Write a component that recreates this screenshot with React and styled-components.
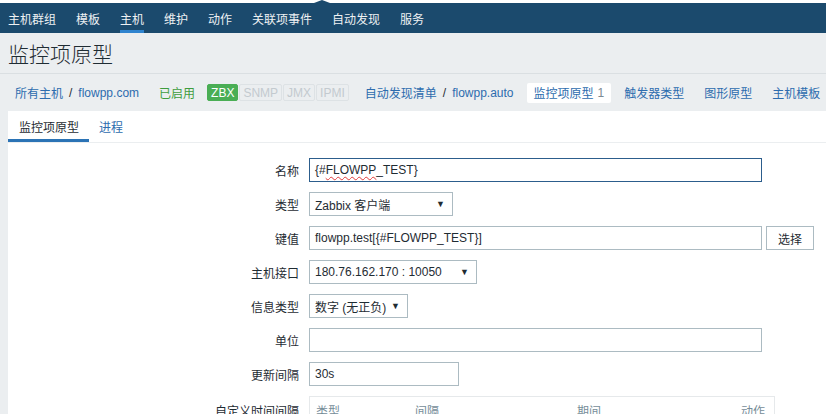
import React from 'react';
import styled, { createGlobalStyle } from 'styled-components';

const FONT = '"Liberation Sans", "Noto Sans CJK SC", Arial, sans-serif';

const GlobalStyle = createGlobalStyle`
  html, body {
    margin: 0;
    padding: 0;
    background: #ebeef0;
    font-family: ${FONT};
    font-size: 12px;
    color: #1f2c33;
    overflow: hidden;
  }
`;

const navItems = ['主机群组', '模板', '主机', '维护', '动作', '关联项事件', '自动发现', '服务'];

const formRows = [
  { label: '名称', kind: 'focused', width: 453 },
  { label: '类型', kind: 'select', width: 144, value: 'Zabbix 客户端' },
  { label: '键值', kind: 'button', width: 453, value: 'flowpp.test[{#FLOWPP_TEST}]' },
  { label: '主机接口', kind: 'select', width: 168, value: '180.76.162.170 : 10050' },
  { label: '信息类型', kind: 'select', width: 99, value: '数字 (无正负)' },
  { label: '单位', kind: 'text', width: 453, value: '' },
  { label: '更新间隔', kind: 'text', width: 150, value: '30s' },
];

function App() {
  return (
    <>
      <GlobalStyle />
      <TopStrip />
      <Nav>
        {navItems.map((item) => (
          <NavItem key={item} active={item === '主机'}>
            {item}
          </NavItem>
        ))}
      </Nav>

      <Header>
        <Title>监控项原型</Title>
      </Header>

      <Crumbs>
        <Crumb>
          <Link>所有主机</Link>
          <Slash>/</Slash>
          <Link>flowpp.com</Link>
        </Crumb>
        <Crumb>
          <Enabled>已启用</Enabled>
          <Badges>
            <Badge on>ZBX</Badge>
            <Badge>SNMP</Badge>
            <Badge>JMX</Badge>
            <Badge>IPMI</Badge>
          </Badges>
        </Crumb>
        <Crumb>
          <Link>自动发现清单</Link>
          <Slash>/</Slash>
          <Link>flowpp.auto</Link>
        </Crumb>
        <Crumb selected>
          <Link>监控项原型</Link>
          <Count>1</Count>
        </Crumb>
        <Crumb>
          <Link>触发器类型</Link>
        </Crumb>
        <Crumb>
          <Link>图形原型</Link>
        </Crumb>
        <Crumb>
          <Link>主机模板</Link>
        </Crumb>
      </Crumbs>

      <Panel>
        <Tabs>
          <Tab active>监控项原型</Tab>
          <Tab>进程</Tab>
        </Tabs>

        <Form>
          {formRows.map((row) => (
            <React.Fragment key={row.label}>
              <Label>{row.label}</Label>
              <Cell>
                {row.kind === 'focused' && (
                  <TextBox width={row.width} focused>
                    {'{#'}
                    <Misspelled>FLOWPP</Misspelled>
                    {'_TEST}'}
                  </TextBox>
                )}
                {row.kind === 'text' && <TextBox width={row.width}>{row.value}</TextBox>}
                {row.kind === 'button' && (
                  <>
                    <TextBox width={row.width}>{row.value}</TextBox>
                    <Button>选择</Button>
                  </>
                )}
                {row.kind === 'select' && (
                  <Select width={row.width}>
                    <span>{row.value}</span>
                    <Arrow>▼</Arrow>
                  </Select>
                )}
              </Cell>
            </React.Fragment>
          ))}
          <Label top>自定义时间间隔</Label>
          <Cell>
            <IntervalTable>
              <span>类型</span>
              <span>间隔</span>
              <span>期间</span>
              <RightCol>动作</RightCol>
            </IntervalTable>
          </Cell>
        </Form>
      </Panel>
    </>
  );
}

export default App;

// Styled Components
const TopStrip = styled.div`
  height: 3px;
  background: #ffffff;
`;

const Nav = styled.nav`
  position: relative;
  display: flex;
  gap: 20px;
  height: 30px;
  padding: 0 8px;
  background: #1b4a6d;

  &::before {
    content: '';
    position: absolute;
    left: 314px;
    top: -3px;
    border-left: 8px solid transparent;
    border-right: 8px solid transparent;
    border-bottom: 3px solid #1b4a6d;
  }
`;

const NavItem = styled.div`
  display: flex;
  align-items: center;
  color: #eef1f3;
  font-size: 12px;
  white-space: nowrap;
  box-shadow: ${({ active }) => (active ? 'inset 0 -3px 0 #2f84cf' : 'none')};
`;

const Header = styled.div`
  height: 35px;
  padding: 5px 8px 0;
  border-bottom: 1px solid #dadfe2;
`;

const Title = styled.h1`
  margin: 0;
  font-size: 21px;
  line-height: 34px;
  font-weight: 300;
  color: #1f2c33;
`;

const Crumbs = styled.div`
  display: flex;
  align-items: center;
  gap: 6px;
  height: 37px;
  padding: 0 8px;
  white-space: nowrap;
`;

const Crumb = styled.div`
  flex-shrink: 0;
  display: flex;
  align-items: center;
  height: 20px;
  padding: 0 7px;
  border-radius: 2px;
  background: ${({ selected }) => (selected ? '#ffffff' : 'transparent')};
`;

const Link = styled.span`
  color: #2d6cae;
`;

const Slash = styled.span`
  margin: 0 6px;
  color: #1f2c33;
`;

const Count = styled.span`
  margin-left: 4px;
  color: #7c8a92;
`;

const Enabled = styled.span`
  color: #3e9d3e;
`;

const Badges = styled.div`
  display: flex;
  gap: 1px;
  margin-left: 12px;
  margin-right: -4px;
`;

const Badge = styled.span`
  display: inline-flex;
  align-items: center;
  height: 15px;
  padding: 0 3px;
  border: 1px solid ${({ on }) => (on ? '#4aae55' : '#dde2e5')};
  border-radius: 2px;
  background: ${({ on }) => (on ? '#4aae55' : '#ebeef0')};
  color: ${({ on }) => (on ? '#ffffff' : '#c3cacf')};
  font-size: 12px;
`;

const Panel = styled.div`
  margin-left: 8px;
  min-height: 320px;
  background: #ffffff;
`;

const Tabs = styled.div`
  display: flex;
  height: 31px;
  border-bottom: 1px solid #ebeef0;
`;

const Tab = styled.div`
  display: flex;
  align-items: center;
  padding: 0 10px 0 ${({ active }) => (active ? '11px' : '10px')};
  color: ${({ active }) => (active ? '#1f2c33' : '#2d6cae')};
  box-shadow: ${({ active }) => (active ? 'inset 0 -3px 0 #2b73b5' : 'none')};
`;

const Form = styled.div`
  display: grid;
  grid-template-columns: 291px 1fr;
  grid-auto-rows: minmax(24px, auto);
  column-gap: 10px;
  row-gap: 10px;
  padding-top: 15px;
`;

const Label = styled.div`
  display: flex;
  align-items: ${({ top }) => (top ? 'flex-start' : 'center')};
  justify-content: flex-end;
  padding-top: ${({ top }) => (top ? '6px' : '0')};
  color: #1f2c33;
  white-space: nowrap;
`;

const Cell = styled.div`
  display: flex;
  align-items: center;
  gap: 4px;
`;

const TextBox = styled.div`
  box-sizing: border-box;
  display: flex;
  align-items: center;
  width: ${({ width }) => width}px;
  height: 24px;
  padding: 0 5px;
  border: 1px solid ${({ focused }) => (focused ? '#2c5d8c' : '#acbbc2')};
  background: #ffffff;
  color: #1f2c33;
  white-space: pre;
`;

const Misspelled = styled.span`
  text-decoration: underline wavy #e23b3b;
  text-underline-offset: 2px;
  text-decoration-thickness: 1px;
`;

const Select = styled(TextBox)`
  justify-content: space-between;
  padding-right: 7px;
`;

const Arrow = styled.span`
  font-size: 9px;
  color: #1f2c33;
`;

const Button = styled.div`
  box-sizing: border-box;
  display: flex;
  align-items: center;
  justify-content: center;
  width: 48px;
  height: 24px;
  border: 1px solid #acbbc2;
  background: #ffffff;
  color: #1f2c33;
`;

const IntervalTable = styled.div`
  box-sizing: border-box;
  display: grid;
  grid-template-columns: 99px 162px 1fr auto;
  align-items: center;
  width: 466px;
  height: 28px;
  padding: 0 9px 0 6px;
  border: 1px solid #e6e9eb;
  color: #768d99;
`;

const RightCol = styled.span`
  text-align: right;
`;
